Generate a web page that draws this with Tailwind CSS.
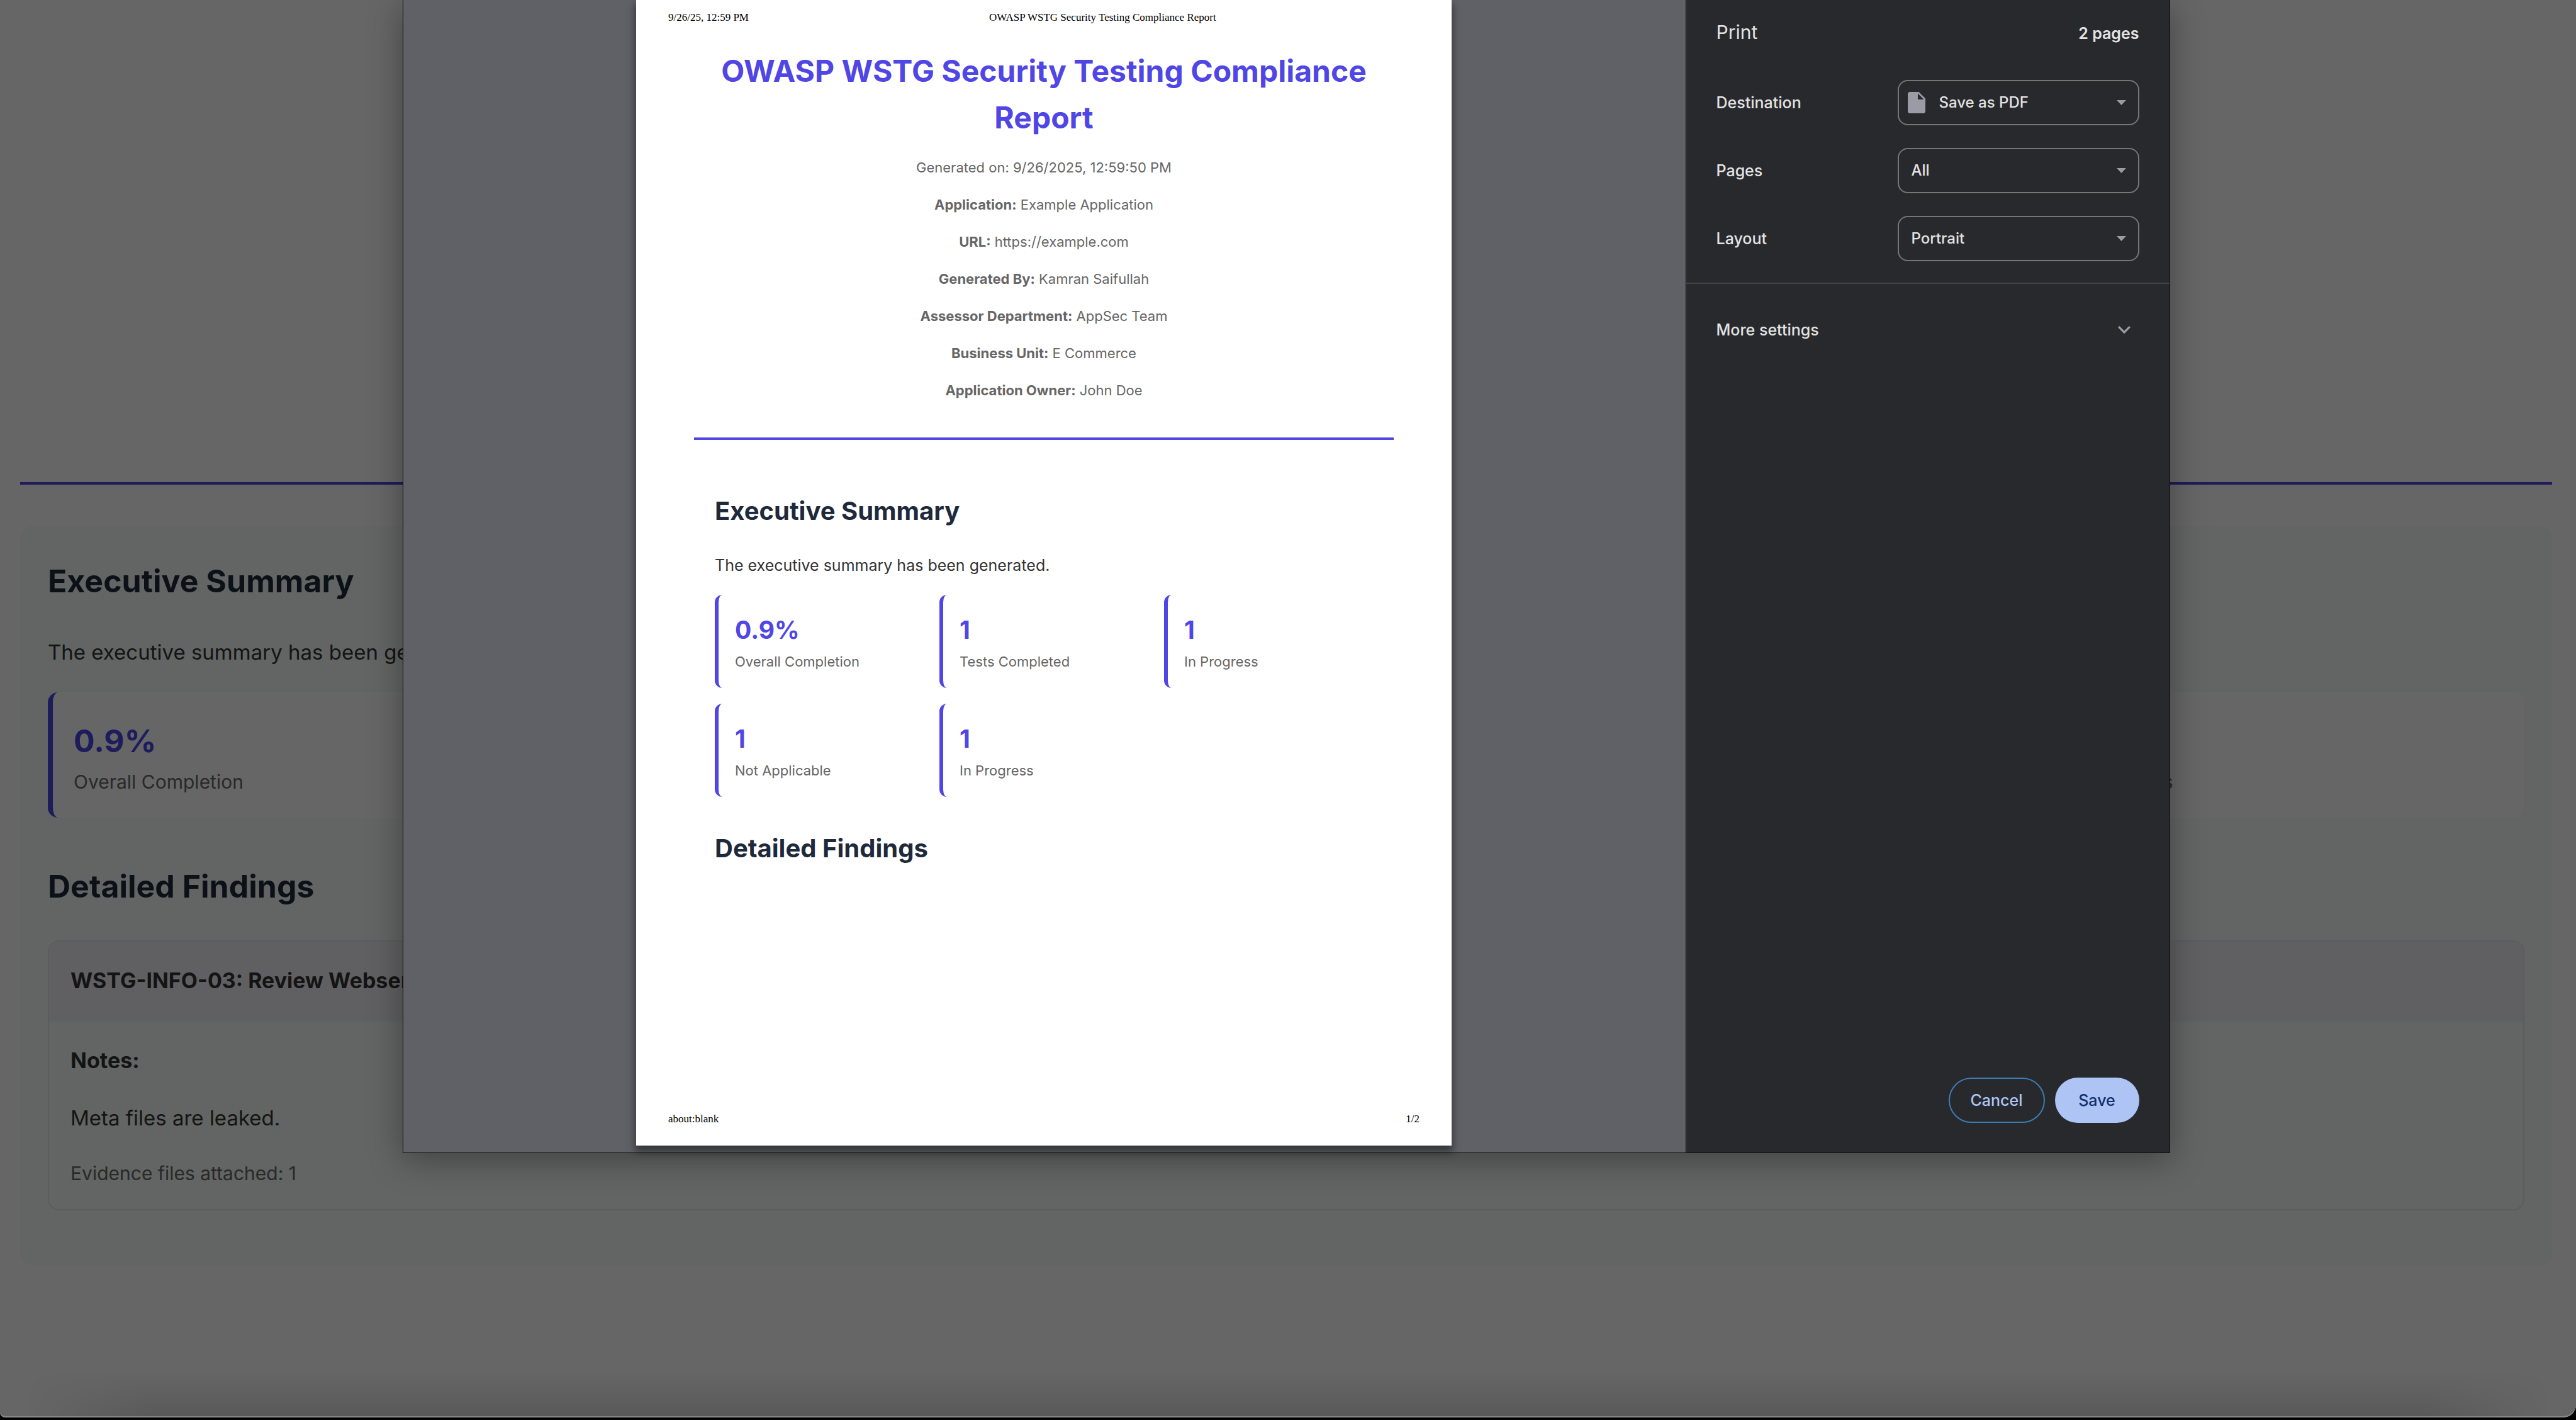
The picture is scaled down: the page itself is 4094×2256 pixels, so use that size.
<!DOCTYPE html>
<html lang="en">
<head>
<meta charset="utf-8">
<meta name="viewport" content="width=device-width, initial-scale=1">
<title>OWASP WSTG Security Testing Compliance Report</title>
<script src="https://cdn.jsdelivr.net/npm/@tailwindcss/browser@4"></script>
</head>
<body class="bg-black font-['Inter',sans-serif]">
<div class="relative min-h-[calc(100vh-4px)] overflow-hidden rounded-br-[20px] rounded-bl-[8px] border-b-2 border-[#8a8a8a] bg-white">

  <!-- Report page behind the print dialog -->
  <main class="pr-[6px] text-[33px] leading-[54px] text-[#333]">
    <div class="px-8">
      <header class="h-[770px] border-b-4 border-[#4f46e5]"></header>
      <section class="mt-[66px] rounded-[18px] bg-[#f5fcf7] px-11 pt-[57px] pb-[87px]">
        <h2 class="text-[50px] leading-[60px] font-bold text-[#1e293b]">Executive Summary</h2>
        <p class="mt-14">The executive summary has been generated.</p>
        <div class="mt-[37px] grid grid-cols-5 gap-[34px]">
          <div class="rounded-[16px] border-l-8 border-[#4f46e5] bg-white pt-[47px] pr-9 pb-[33px] pl-[33px]">
            <div class="text-[50px] leading-[60px] font-bold text-[#4f46e5]">0.9%</div>
            <div class="mt-[11px] text-[30px] leading-[48px] text-[#666]">Overall Completion</div>
          </div>
          <div class="rounded-[16px] border-l-8 border-[#4f46e5] bg-white pt-[47px] pr-9 pb-[33px] pl-[33px]">
            <div class="text-[50px] leading-[60px] font-bold text-[#4f46e5]">1</div>
            <div class="mt-[11px] text-[30px] leading-[48px] text-[#666]">Tests Completed</div>
          </div>
          <div class="rounded-[16px] border-l-8 border-[#4f46e5] bg-white pt-[47px] pr-9 pb-[33px] pl-[33px]">
            <div class="text-[50px] leading-[60px] font-bold text-[#4f46e5]">1</div>
            <div class="mt-[11px] text-[30px] leading-[48px] text-[#666]">In Progress</div>
          </div>
          <div class="rounded-[16px] border-l-8 border-[#4f46e5] bg-white pt-[47px] pr-9 pb-[33px] pl-[33px]">
            <div class="text-[50px] leading-[60px] font-bold text-[#4f46e5]">1</div>
            <div class="mt-[11px] text-[30px] leading-[48px] text-[#666]">Not Applicable</div>
          </div>
          <div class="rounded-[16px] border-l-8 border-[#4f46e5] bg-white pt-[47px] pr-9 pb-[33px] pl-[33px]">
            <div class="text-[50px] leading-[60px] font-bold text-[#4f46e5]">1</div>
            <div class="mt-[11px] text-[30px] leading-[48px] text-[#666]">In Progress</div>
          </div>
        </div>
        <h2 class="mt-[79px] text-[50px] leading-[60px] font-bold text-[#1e293b]">Detailed Findings</h2>
        <article class="mt-14 overflow-hidden rounded-[18px] border-2 border-[#e6e6ee]">
          <h3 class="bg-[#f1f1f6] px-[34px] pt-[35px] pb-[38px] text-[34px] font-bold">WSTG-INFO-03: Review Webserver Metafiles for Information Leakage</h3>
          <div class="px-[34px] pt-[35px] pb-[33px]">
            <h4 class="text-[34px] font-bold">Notes:</h4>
            <p class="mt-[37px]">Meta files are leaked.</p>
            <p class="mt-[37px] text-[30px] leading-[48px] text-[#666]">Evidence files attached: 1</p>
          </div>
        </article>
      </section>
    </div>
  </main>

  <!-- Scrim, with the soft shades at the window's bottom and right edges -->
  <div class="absolute inset-0 bg-black/60"></div>
  <div class="absolute inset-x-10 bottom-0 h-[70px] bg-linear-to-t from-black/12 to-transparent mask-x-from-95% mask-x-to-100%"></div>
  <div class="absolute top-[960px] right-0 h-[240px] w-[50px] bg-radial-[closest-side_at_right] from-black/5 to-transparent"></div>

  <!-- Print dialog -->
  <div class="absolute inset-x-0 top-0 pr-[6px]">
    <div role="dialog" aria-label="Print" class="mx-auto flex w-full max-w-[2809px] border-x border-b border-[#0c0d0d] bg-[#28292c] shadow-[0_10px_50px_rgba(0,0,0,0.35)]">

      <div class="flex-1 bg-[#606167] pb-[11px]">
        <div class="mx-auto flex min-h-[1820px] w-full max-w-[1296px] flex-col bg-white pt-4 pb-[30px] shadow-[0_8px_12px_2px_rgba(0,0,0,0.45)]">
          <div class="flex px-[51px] font-['Liberation_Serif',serif] text-[17px] leading-6 text-black">
            <span class="w-[510px]">9/26/25, 12:59 PM</span>
            <span>OWASP WSTG Security Testing Compliance Report</span>
          </div>
          <div class="mt-9 px-[92px]">
            <div class="border-b-4 border-[#4f46e5] pb-[57px] text-center text-[22px] leading-9 text-[#666]">
              <h1 class="text-[48px] leading-[74px] font-bold text-[#4f46e5]">OWASP WSTG Security Testing Compliance Report</h1>
              <div class="mt-6 flex flex-col gap-[23px]">
                <p>Generated on: 9/26/2025, 12:59:50 PM</p>
                <p><strong class="font-bold">Application:</strong> Example Application</p>
                <p><strong class="font-bold">URL:</strong> https://example.com</p>
                <p><strong class="font-bold">Generated By:</strong> Kamran Saifullah</p>
                <p><strong class="font-bold">Assessor Department:</strong> AppSec Team</p>
                <p><strong class="font-bold">Business Unit:</strong> E Commerce</p>
                <p><strong class="font-bold">Application Owner:</strong> John Doe</p>
              </div>
            </div>
            <div class="mt-[89px] px-[33px]">
              <h2 class="text-[40px] leading-[48px] font-bold text-[#1e293b]">Executive Summary</h2>
              <p class="mt-[42px] text-[25px] leading-10 text-[#333]">The executive summary has been generated.</p>
              <div class="mt-[27px] grid grid-cols-3 gap-[25px]">
                <div class="rounded-[12px] border-l-6 border-[#4f46e5] pt-8 pb-6 pl-[26px]">
                  <div class="text-[39px] leading-[48px] font-bold text-[#4f46e5]">0.9%</div>
                  <div class="mt-2 text-[22px] leading-9 text-[#666]">Overall Completion</div>
                </div>
                <div class="rounded-[12px] border-l-6 border-[#4f46e5] pt-8 pb-6 pl-[26px]">
                  <div class="text-[39px] leading-[48px] font-bold text-[#4f46e5]">1</div>
                  <div class="mt-2 text-[22px] leading-9 text-[#666]">Tests Completed</div>
                </div>
                <div class="rounded-[12px] border-l-6 border-[#4f46e5] pt-8 pb-6 pl-[26px]">
                  <div class="text-[39px] leading-[48px] font-bold text-[#4f46e5]">1</div>
                  <div class="mt-2 text-[22px] leading-9 text-[#666]">In Progress</div>
                </div>
                <div class="rounded-[12px] border-l-6 border-[#4f46e5] pt-8 pb-6 pl-[26px]">
                  <div class="text-[39px] leading-[48px] font-bold text-[#4f46e5]">1</div>
                  <div class="mt-2 text-[22px] leading-9 text-[#666]">Not Applicable</div>
                </div>
                <div class="rounded-[12px] border-l-6 border-[#4f46e5] pt-8 pb-6 pl-[26px]">
                  <div class="text-[39px] leading-[48px] font-bold text-[#4f46e5]">1</div>
                  <div class="mt-2 text-[22px] leading-9 text-[#666]">In Progress</div>
                </div>
              </div>
              <h2 class="mt-[58px] text-[40px] leading-[48px] font-bold text-[#1e293b]">Detailed Findings</h2>
            </div>
          </div>
          <div class="mt-auto flex justify-between px-[51px] font-['Liberation_Serif',serif] text-[17px] leading-6 text-black">
            <span>about:blank</span>
            <span>1/2</span>
          </div>
        </div>
      </div>

      <form class="flex w-[770px] shrink-0 flex-col border-l-2 border-[#47484b] pt-[31px] pb-[47px] text-[25px] leading-10 font-medium text-[#e3e3e3]">
        <div class="flex items-baseline justify-between px-12">
          <h1 class="text-[30px] font-normal">Print</h1>
          <span class="font-semibold">2 pages</span>
        </div>
        <div class="mt-[54px] flex flex-col gap-9 px-12">
          <div class="flex items-center justify-between">
            <label for="destination">Destination</label>
            <div class="relative">
              <select id="destination" class="block h-[72px] w-[384px] appearance-none rounded-[16px] border-2 border-[#757775] bg-transparent pr-14 pl-16 text-[24px] text-[#e3e3e3]"><option>Save as PDF</option></select>
              <svg class="pointer-events-none absolute top-[19px] left-4 h-[34px] w-7" viewBox="0 0 28 34" fill="#9a9ba5" aria-hidden="true"><path fill-rule="evenodd" d="M3.500 0H17.500L28 10.500V30.500a3.500 3.500 0 0 1-3.500 3.500h-21A3.500 3.500 0 0 1 0 30.500v-27A3.500 3.500 0 0 1 3.500 0ZM16 2.500V12h9.500Z"/></svg>
              <svg class="pointer-events-none absolute top-8 right-[21px] h-2 w-[15px]" viewBox="0 0 15 8" fill="#9a9ba5" aria-hidden="true"><path d="M0 0h15L7.500 8z"/></svg>
            </div>
          </div>
          <div class="flex items-center justify-between">
            <label for="pages">Pages</label>
            <div class="relative">
              <select id="pages" class="block h-[72px] w-[384px] appearance-none rounded-[16px] border-2 border-[#757775] bg-transparent pr-14 pl-5 text-[24px] text-[#e3e3e3]"><option>All</option></select>
              <svg class="pointer-events-none absolute top-8 right-[21px] h-2 w-[15px]" viewBox="0 0 15 8" fill="#9a9ba5" aria-hidden="true"><path d="M0 0h15L7.500 8z"/></svg>
            </div>
          </div>
          <div class="flex items-center justify-between">
            <label for="layout">Layout</label>
            <div class="relative">
              <select id="layout" class="block h-[72px] w-[384px] appearance-none rounded-[16px] border-2 border-[#757775] bg-transparent pr-14 pl-5 text-[24px] text-[#e3e3e3]"><option>Portrait</option></select>
              <svg class="pointer-events-none absolute top-8 right-[21px] h-2 w-[15px]" viewBox="0 0 15 8" fill="#9a9ba5" aria-hidden="true"><path d="M0 0h15L7.500 8z"/></svg>
            </div>
          </div>
        </div>
        <button type="button" class="mt-[34px] flex items-center justify-between border-t-2 border-[#424345] px-12 pt-[53px]">
          <span>More settings</span>
          <svg class="mr-[14px] h-[13px] w-5" viewBox="0 0 20 13" fill="none" stroke="#9a9ba5" stroke-width="3.200" aria-hidden="true"><path d="M1.200 1.200 10 10l8.800-8.800"/></svg>
        </button>
        <div class="mt-auto flex justify-end gap-4 px-12">
          <button type="button" class="h-[72px] w-[153px] rounded-full border-2 border-[#3c7cb4] text-[#adc6f7]">Cancel</button>
          <button type="submit" class="h-[72px] w-[134px] rounded-full bg-[#adc4f5] text-[#12306b]">Save</button>
        </div>
      </form>
    </div>
  </div>
</div>
</body>
</html>
